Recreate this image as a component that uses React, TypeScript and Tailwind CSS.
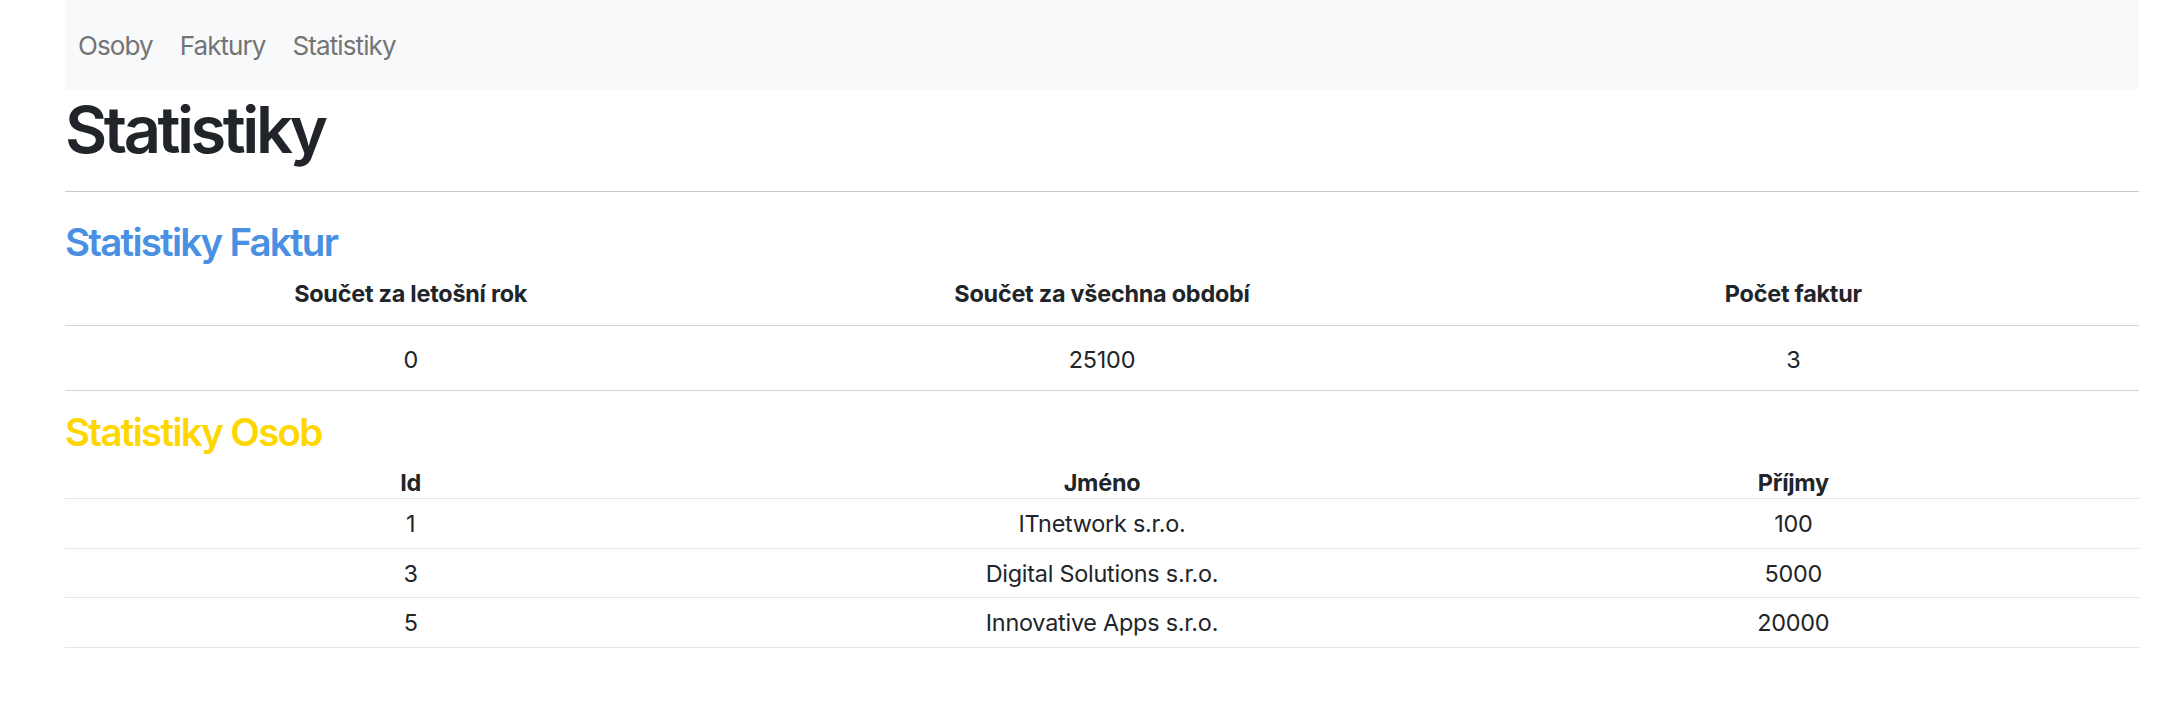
import React from 'react'

const invoiceStats = {
  thisYear: 0,
  allTime: 25100,
  count: 3
}

const people = [
  { id: 1, name: 'ITnetwork s.r.o.', revenue: 100 },
  { id: 3, name: 'Digital Solutions s.r.o.', revenue: 5000 },
  { id: 5, name: 'Innovative Apps s.r.o.', revenue: 20000 }
]

const NavBar: React.FC = () => (
  <nav className="flex h-[90px] items-center gap-[27px] bg-[#f8f9fa] px-[13px] text-[26px] tracking-[-0.035em] text-[#737475]">
    <a href="#">Osoby</a>
    <a href="#">Faktury</a>
    <a href="#">Statistiky</a>
  </nav>
)

const App: React.FC = () => {
  return (
    <div className="min-h-[710px] bg-white pl-[65px] pr-[32px] font-['Inter','Liberation_Sans',sans-serif] text-[#212529]">
      <NavBar />

      <h1 className="mt-[1px] text-[65px] leading-[78px] font-semibold tracking-[-0.053em]">Statistiky</h1>
      <hr className="mt-[22px] border-t border-[#c8c9ca]" />

      <h3 className="mt-[27px] text-[38.5px] leading-[46px] font-semibold tracking-[-0.046em] text-[#4a90e2]">
        Statistiky Faktur
      </h3>
      <table className="w-full table-fixed border-collapse text-center text-[23.4px] leading-[35px] tracking-[-0.01em]">
        <thead>
          <tr className="border-b border-[#d3d4d5]">
            <th className="pt-[11px] pb-[14px] font-bold">Součet za letošní rok</th>
            <th className="pt-[11px] pb-[14px] font-bold">Součet za všechna období</th>
            <th className="pt-[11px] pb-[14px] font-bold">Počet faktur</th>
          </tr>
        </thead>
        <tbody>
          <tr className="border-b border-[#d3d4d5]">
            <td className="pt-[16px] pb-[13px]">{invoiceStats.thisYear}</td>
            <td className="pt-[16px] pb-[13px]">{invoiceStats.allTime}</td>
            <td className="pt-[16px] pb-[13px]">{invoiceStats.count}</td>
          </tr>
        </tbody>
      </table>

      <h3 className="mt-[18px] text-[38.5px] leading-[46px] font-semibold tracking-[-0.044em] text-[#ffd700]">
        Statistiky Osob
      </h3>
      <table className="w-full table-fixed border-collapse text-center text-[23.4px] leading-[35px] tracking-[-0.01em]">
        <thead>
          <tr className="border-b border-[#e3e5e7]">
            <th className="pt-[18px] pb-[5px] leading-[20px] font-bold">Id</th>
            <th className="pt-[18px] pb-[5px] leading-[20px] font-bold">Jméno</th>
            <th className="pt-[18px] pb-[5px] leading-[20px] font-bold">Příjmy</th>
          </tr>
        </thead>
        <tbody>
          {people.map((p) => (
            <tr key={p.id} className="border-b border-[#e3e5e7]">
              <td className="pt-[7px] pb-[6.5px]">{p.id}</td>
              <td className="pt-[7px] pb-[6.5px]">{p.name}</td>
              <td className="pt-[7px] pb-[6.5px]">{p.revenue}</td>
            </tr>
          ))}
        </tbody>
      </table>
    </div>
  )
}

export default App
